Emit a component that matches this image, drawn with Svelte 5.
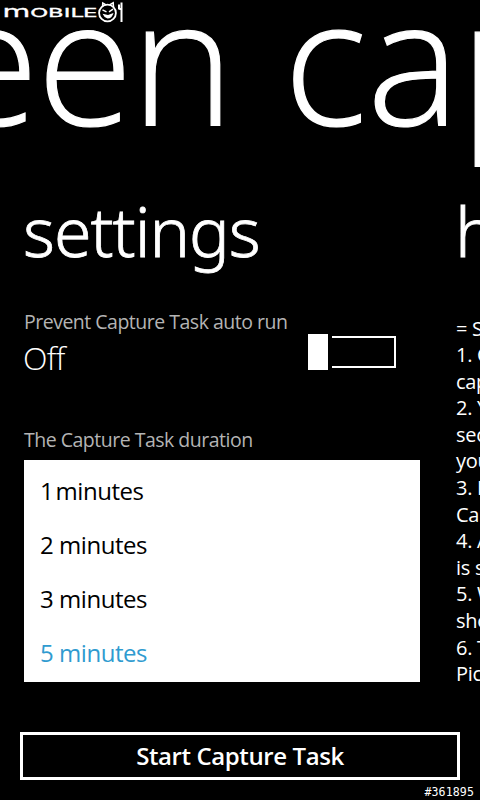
<script>
  const durations = [1, 2, 3, 5];
  let selected = $state(5);
  const help = ['= Screen Capture =', '1. Click Start', 'capture task.', '2. You have 5', 'seconds before', 'your screen', '3. Press the', 'Capture button', '4. After task', 'is started', '5. When done', 'shots are in', '6. The saved', 'Pictures hub'];
</script>

<main>
  <svg class="logo" viewBox="0 0 128 26" aria-label="Mobile01">
    <text x="2.5" y="17" textLength="95" lengthAdjust="spacingAndGlyphs"><tspan class="m">m</tspan>OBILE</text>
    <g fill="none" stroke="#fff">
      <circle cx="107.5" cy="13" r="8.4" stroke-width="1.8" />
      <path d="M102.5 6.5 L102.8 3 L106 4.8 M109.5 4.8 L113.2 2.8 L113.5 7" stroke-width="1.5" />
      <path d="M102.5 9.8 L106.5 11.8 M113 9.2 L109 11.8" stroke-width="1.4" />
      <path d="M119 4.5 V8.5 L121.5 9.5 M121.5 2.5 V22" stroke-width="2" />
    </g>
    <path d="M102.5 13.8 L108 15 L113.5 13 Q112 18.5 107.5 18.5 Q104 17.5 102.5 13.8" fill="#fff" />
  </svg>
  <h1>screen <span>capture</span></h1>
  <div class="panorama">
    <section class="settings">
      <h2>settings</h2>
      <div class="label">Prevent Capture Task auto run</div>
      <div class="toggle-row">
        <span class="state">Off</span>
        <span class="toggle"><i class="knob"></i><i class="track"></i></span>
      </div>
      <div class="label">The Capture Task duration</div>
      <div class="list">
        {#each durations as d}
          <div class="item" class:one={d === 1} class:selected={d === selected} onclick={() => (selected = d)} role="presentation">{d} minutes</div>
        {/each}
      </div>
    </section>
    <section class="help">
      <h2>help</h2>
      <div class="lines">
        {#each help as line}<div>{line}</div>{/each}
      </div>
    </section>
  </div>
  <button>Start Capture Task</button>
  <footer>#361895</footer>
</main>

<style>
  :global(body) { background: #000; overflow: hidden; }
  main {
    position: relative;
    display: flex;
    flex-direction: column;
    width: 480px;
    height: 800px;
    overflow: hidden;
    background: #000;
    color: #fff;
    font-family: "Open Sans", "Noto Sans", sans-serif;
    white-space: nowrap;
  }
  .logo { position: absolute; left: 0; top: 0; width: 128px; height: 26px; z-index: 1; }
  .logo text { font: 400 12px "DejaVu Sans", sans-serif; fill: #fff; stroke: #fff; stroke-width: 0.3px; }
  .logo .m { font-size: 15px; }
  h1 {
    flex: none;
    margin: 0 0 0 -284px;
    height: 190px;
    line-height: 114px;
    font-size: 175px;
    font-weight: 300;
    letter-spacing: -2px;
    word-spacing: 8px;
    -webkit-text-stroke: 1.2px #fff;
  }
  h1 span { letter-spacing: 0; }
  .panorama { display: flex; flex: none; height: 542px; }
  .settings { flex: none; width: 396px; padding-left: 24px; margin-right: 36px; }
  .help { flex: none; width: 396px; }
  h2 {
    margin: 0 0 0 -1px;
    height: 119px;
    line-height: 82px;
    font-family: "Noto Sans", "Open Sans", sans-serif;
    font-size: 68px;
    font-weight: 300;
    letter-spacing: -1px;
    -webkit-text-stroke: 0.8px #fff;
  }
  .label { font-size: 19.5px; line-height: 26px; letter-spacing: -0.5px; color: #b4b4b4; }
  .toggle-row { display: flex; justify-content: space-between; height: 92px; }
  .state { font-size: 32px; font-weight: 300; line-height: 46px; letter-spacing: -0.7px; margin-left: -1px; }
  .toggle { display: flex; align-items: center; gap: 4px; width: 88px; height: 36px; margin: -1px 24px 0 0; }
  .knob { width: 20px; height: 36px; background: #fff; }
  .track { box-sizing: border-box; width: 64px; height: 32px; border: 2px solid #fff; border-left: 0; }
  .list { box-sizing: border-box; width: 396px; height: 222px; margin-top: 7px; padding: 4px 16px; background: #fff; color: #000; }
  .item { height: 54px; line-height: 54px; font-size: 24px; letter-spacing: -0.45px; }
  .one { word-spacing: -3.5px; }
  .selected { color: #2f9bd0; }
  .lines { font-size: 20px; line-height: 26.6px; letter-spacing: -0.3px; margin-top: 6.5px; }
  button {
    flex: none;
    box-sizing: border-box;
    width: 440px;
    height: 48px;
    margin: 0 20px;
    padding: 0;
    border: 3px solid #fff;
    background: #000;
    color: #fff;
    font: 600 24px/42px "Open Sans", sans-serif;
    letter-spacing: -0.4px;
  }
  footer { padding: 5px 6px 0 0; text-align: right; font: 11.6px/14px "DejaVu Sans Mono", monospace; letter-spacing: 0.1px; }
</style>
